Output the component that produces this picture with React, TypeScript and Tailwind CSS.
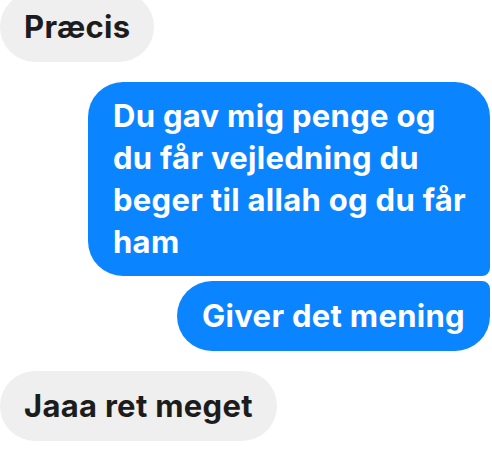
import React from 'react';

const FONT = { fontFamily: 'Inter, "Noto Sans", sans-serif' };

const Incoming: React.FC<{ text: string; className?: string }> = ({ text, className = '' }) => (
  <div className={`self-start rounded-[35px] bg-[#efefef] px-6 py-[14px] text-[31px] leading-[42px] font-bold tracking-[0.3px] text-[#1c1c1c] ${className}`}>
    {text}
  </div>
);

export default function App() {
  return (
    <div className="w-[492px] h-[456px] overflow-hidden bg-white" style={FONT}>
      <div className="flex flex-col pr-[2px]">
        <Incoming text="Præcis" className="-mt-[8px]" />

        {/* outgoing group */}
        <div className="mt-5 flex flex-col items-end gap-[5px]">
          <div className="w-[402px] whitespace-nowrap rounded-[35px] rounded-br-[8px] bg-[#0b84ff] px-[25px] py-[13px] text-[31px] leading-[42px] font-bold tracking-[0.3px] text-white">
            Du gav mig penge og<br />
            du får vejledning du<br />
            beger til allah og du får<br />
            ham
          </div>
          <div className="rounded-[35px] rounded-tr-[8px] bg-[#0b84ff] px-[25px] py-[14px] text-[31px] leading-[42px] font-bold tracking-[0.3px] text-white">
            Giver det mening
          </div>
        </div>

        <Incoming text="Jaaa ret meget" className="mt-5" />
      </div>
    </div>
  );
}
